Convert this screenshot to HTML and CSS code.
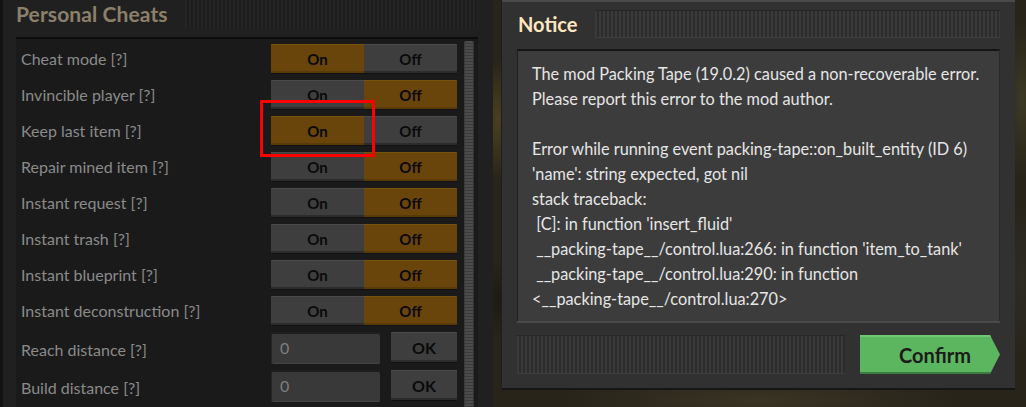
FILE: index.html
```html
<!DOCTYPE html>
<html lang="en">
<head>
<meta charset="utf-8">
<title>Personal Cheats / Notice</title>
<link rel="stylesheet" href="styles.css">
</head>
<body>
<div class="screen">
  <section class="cheats">
    <header class="cheats-head">
      <h1 class="cheats-title">Personal Cheats</h1>
      <div class="stripes stripes-dark head-stripes"></div>
    </header>
    <div class="cheats-body">
      <div class="rows">
        <div class="row">
          <span class="label">Cheat mode [?]</span>
          <div class="toggle"><button class="btn on">On</button><button class="btn">Off</button></div>
        </div>
        <div class="row">
          <span class="label">Invincible player [?]</span>
          <div class="toggle"><button class="btn">On</button><button class="btn on">Off</button></div>
        </div>
        <div class="row">
          <span class="label">Keep last item [?]</span>
          <div class="toggle"><button class="btn on">On</button><button class="btn">Off</button></div>
        </div>
        <div class="row">
          <span class="label">Repair mined item [?]</span>
          <div class="toggle"><button class="btn">On</button><button class="btn on">Off</button></div>
        </div>
        <div class="row">
          <span class="label">Instant request [?]</span>
          <div class="toggle"><button class="btn">On</button><button class="btn on">Off</button></div>
        </div>
        <div class="row">
          <span class="label">Instant trash [?]</span>
          <div class="toggle"><button class="btn">On</button><button class="btn on">Off</button></div>
        </div>
        <div class="row">
          <span class="label">Instant blueprint [?]</span>
          <div class="toggle"><button class="btn">On</button><button class="btn on">Off</button></div>
        </div>
        <div class="row">
          <span class="label">Instant deconstruction [?]</span>
          <div class="toggle"><button class="btn">On</button><button class="btn on">Off</button></div>
        </div>
        <div class="row row-input">
          <span class="label">Reach distance [?]</span>
          <div class="field"><span class="input">0</span><button class="btn ok">OK</button></div>
        </div>
        <div class="row row-input">
          <span class="label">Build distance [?]</span>
          <div class="field"><span class="input">0</span><button class="btn ok">OK</button></div>
        </div>
      </div>
      <div class="scrollbar"></div>
      <div class="highlight"></div>
    </div>
  </section>

  <section class="notice">
    <header class="notice-head">
      <h2 class="notice-title">Notice</h2>
      <div class="stripes stripes-light notice-stripes"></div>
    </header>
    <div class="notice-body">
<p class="msg">The mod Packing Tape (19.0.2) caused a non-recoverable error.
Please report this error to the mod author.

Error while running event packing-tape::on_built_entity (ID 6)
'name': string expected, got nil
stack traceback:
 [C]: in function 'insert_fluid'
 __packing-tape__/control.lua:266: in function 'item_to_tank'
 __packing-tape__/control.lua:290: in function
&lt;__packing-tape__/control.lua:270&gt;</p>
    </div>
    <footer class="notice-foot">
      <div class="stripes stripes-light foot-stripes"></div>
      <button class="confirm">Confirm</button>
    </footer>
  </section>
</div>
</body>
</html>
```

FILE: styles.css
```css
* { box-sizing: border-box; }

html, body {
  margin: 0;
  padding: 0;
}

body {
  width: 1026px;
  height: 407px;
  overflow: hidden;
  font-family: Lato, "Open Sans", sans-serif;
  background:
    radial-gradient(ellipse 30px 60px at 498px 120px, #4a4020 0%, rgba(0,0,0,0) 100%),
    radial-gradient(ellipse 20px 40px at 500px 300px, #1c1a14 0%, rgba(0,0,0,0) 100%),
    radial-gradient(ellipse 200px 30px at 760px 400px, #3a3424 0%, rgba(0,0,0,0) 100%),
    radial-gradient(ellipse 20px 80px at 1022px 100px, #3d3a22 0%, rgba(0,0,0,0) 100%),
    radial-gradient(ellipse 20px 80px at 1022px 280px, #2e2c24 0%, rgba(0,0,0,0) 100%),
    #28241a;
}

.screen {
  display: flex;
  height: 407px;
}

button {
  font-family: inherit;
  border: none;
  padding: 0;
  margin: 0;
  cursor: pointer;
}

/* ---------- stripes ---------- */
.stripes-dark {
  background: repeating-linear-gradient(to right, #252525 0 2px, #1c1c1c 2px 4px);
}
.stripes-light {
  background: repeating-linear-gradient(to right, #3a3a3a 0 2px, #2c2c2c 2px 4px);
  border-top: 1px solid #262626;
  border-bottom: 1px solid #3e3e3e;
}

/* ---------- left panel ---------- */
.cheats {
  width: 493px;
  flex: none;
  background: #202020;
  border-left: 3px solid #141210;
  padding: 0 15px 0 13px;
  display: flex;
  flex-direction: column;
}

.cheats-head {
  height: 37px;
  flex: none;
  display: flex;
  align-items: flex-start;
}

.cheats-title {
  margin: 0;
  font-size: 21px;
  font-weight: 700;
  line-height: 28px;
  color: #8c806b;
  letter-spacing: 0.1px;
}

.head-stripes {
  margin-left: auto;
  width: 293px;
  height: 28px;
}

.cheats-body {
  flex: 1;
  position: relative;
  display: flex;
  background: #1a1a1a;
  border-top: 2px solid #0c0c0c;
  padding: 5px 0 0 5px;
}

.rows {
  width: 436px;
  flex: none;
}

.row {
  display: flex;
  align-items: center;
  height: 29px;
  margin-bottom: 7px;
}
.row-input {
  height: 32px;
  margin-top: 2px;
  margin-bottom: 6px;
  align-items: flex-start;
}
.row-input .label {
  line-height: 32px;
  padding-top: 2px;
}

.label {
  width: 250px;
  flex: none;
  color: #8a8a8a;
  font-size: 16px;
  white-space: nowrap;
}

.toggle {
  display: flex;
}

.btn {
  width: 93px;
  height: 29px;
  background: #3e3e3e;
  color: #0a0a0a;
  font-size: 15px;
  font-weight: 700;
  box-shadow: inset 0 1px 0 #4a4a4a, inset 0 -2px 0 #2c2c2c, 0 1px 0 #111;
}
.btn.on {
  background: #6a450b;
  box-shadow: inset 0 1px 0 #77520f, inset 0 -2px 0 #5a3a08, 0 1px 0 #111;
}

.field {
  display: flex;
  gap: 11px;
}

.input {
  display: block;
  width: 109px;
  height: 32px;
  background: #393939;
  border-radius: 2px;
  box-shadow: inset 0 2px 0 #1e1e1e, inset 1px 0 0 #262626, inset 0 -1px 0 #444;
  color: #7e7e7e;
  font-size: 16px;
  line-height: 32px;
  padding-left: 9px;
}

.btn.ok {
  width: 66px;
  height: 30px;
  font-size: 16px;
}

.scrollbar {
  width: 10px;
  margin-left: 7px;
  margin-top: -3px;
  border-radius: 2px 2px 0 0;
  background:
    repeating-linear-gradient(to bottom, #4b4b4b 0 2px, #3a3a3a 2px 3px);
  box-shadow: inset 1px 0 0 #3a3a3a, inset -1px 0 0 #333;
}

.highlight {
  position: absolute;
  left: 244px;
  top: 61px;
  width: 115px;
  height: 57px;
  border: 3px solid #ff0000;
}

/* ---------- notice panel ---------- */
.notice {
  width: 513px;
  height: 388px;
  flex: none;
  margin-left: 9px;
  background: #313131;
  border-top: 2px solid #4a4a4a;
  box-shadow: 0 2px 0 #161616, -1px 0 0 #1e1e1e;
  padding: 8px 15px 0 15px;
  display: flex;
  flex-direction: column;
}

.notice-head {
  display: flex;
  align-items: center;
  height: 28px;
  flex: none;
}

.notice-title {
  margin: 0 0 0 1px;
  font-size: 20px;
  font-weight: 700;
  color: #ffe6c0;
  line-height: 28px;
}

.notice-stripes {
  margin-left: auto;
  width: 405px;
  height: 28px;
}

.notice-body {
  margin-top: 11px;
  height: 272px;
  flex: none;
  background: #3c3c3c;
  border-top: 2px solid #151515;
  border-left: 1px solid #202020;
  border-right: 1px solid #2a2a2a;
  box-shadow: 0 2px 0 #4a4a4a;
  padding: 10px 10px 0 14px;
}

.msg {
  margin: 0;
  white-space: pre-wrap;
  color: #e6e6e6;
  font-size: 16.3px;
  line-height: 25px;
}

.notice-foot {
  margin-top: 14px;
  display: flex;
  align-items: stretch;
  height: 39px;
  gap: 15px;
}

.foot-stripes {
  width: 328px;
}

.confirm {
  width: 140px;
  height: 39px;
  background: #5cb55f;
  color: #1b1b1b;
  font-size: 20px;
  font-weight: 700;
  padding-left: 10px;
  clip-path: polygon(0 0, 130px 0, 140px 50%, 130px 100%, 0 100%);
  box-shadow: inset 0 2px 0 #6fc873, inset 0 -2px 0 #3b7d3e;
}
```
